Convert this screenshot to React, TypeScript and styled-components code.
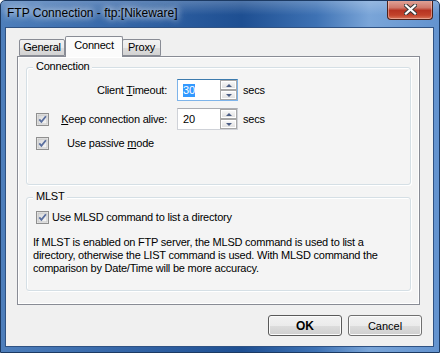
import React, { FC } from "react";
import styled, { createGlobalStyle } from "styled-components";

const GlobalStyle = createGlobalStyle`
  html, body {
    margin: 0;
    padding: 0;
    background: #ffffff;
  }
  body {
    font-family: "Liberation Sans", Arial, sans-serif;
    font-size: 11px;
    letter-spacing: -0.22px;
    color: #000000;
  }
  * {
    box-sizing: border-box;
  }
`;

const Window = styled.div`
  width: 440px;
  height: 353px;
  border: 1px solid #1c3a63;
  border-radius: 5px 5px 0 0;
  background: linear-gradient(180deg, rgba(255, 255, 255, 0.22) 0px, rgba(255, 255, 255, 0) 14px),
    linear-gradient(90deg, #4d7ebb 0%, #3768a9 25%, #1e4f92 55%, #3e72b4 72%, #7aa5d8 84%, #6393cf 100%);
  padding: 0 5px 5px 4px;
  display: flex;
  flex-direction: column;
  overflow: hidden;
`;

const TitleBar = styled.div`
  height: 26px;
  display: flex;
  align-items: flex-start;
  justify-content: space-between;
`;

const TitleText = styled.div`
  margin: 4px 0 0 2px;
  font-family: "Liberation Sans", Arial, sans-serif;
  font-size: 12px;
  letter-spacing: 0;
  line-height: 16px;
  color: #000000;
  text-shadow: 0 0 6px #ffffff, 0 0 10px rgba(255, 255, 255, 0.8);
`;

const CloseButton = styled.div`
  width: 46px;
  height: 20px;
  margin: -1px 1px 0 0;
  border: 1px solid #4d2119;
  border-top: none;
  border-radius: 0 0 4px 4px;
  background: linear-gradient(180deg, #e2a79c 0%, #d0796b 40%, #b73422 55%, #c2432b 80%, #d9765a 100%);
  box-shadow: inset 0 0 0 1px rgba(255, 220, 210, 0.45);
  display: flex;
  align-items: center;
  justify-content: center;
`;

const Client = styled.div`
  flex: 1;
  border: 1px solid #2f5283;
  background: #f0f0f0;
  padding: 8px 11px 10px 11px;
  display: flex;
  flex-direction: column;
`;

const TabStrip = styled.div`
  height: 20px;
  padding-left: 2px;
  display: flex;
  align-items: flex-end;
  position: relative;
  z-index: 1;
`;

const Tab = styled.div<{ $active?: boolean; $width: number }>`
  width: ${(p) => p.$width}px;
  height: ${(p) => (p.$active ? 21 : 17)}px;
  margin-bottom: ${(p) => (p.$active ? -1 : 0)}px;
  margin-left: ${(p) => (p.$active ? 0 : -1)}px;
  border: 1px solid #898c95;
  border-bottom: ${(p) => (p.$active ? "none" : "1px solid #898c95")};
  border-radius: 2px 2px 0 0;
  background: ${(p) =>
    p.$active
      ? "#fbfbfb"
      : "linear-gradient(180deg, #f2f2f2 0%, #ebebeb 50%, #dddddd 51%, #d3d3d3 100%)"};
  display: flex;
  align-items: center;
  justify-content: center;
  padding-bottom: ${(p) => (p.$active ? 3 : 0)}px;
  line-height: 13px;
  &:first-child {
    margin-left: 0;
  }
`;

const Panel = styled.div`
  width: 403px;
  height: 249px;
  border: 1px solid #898c95;
  background: #f4f4f4;
  box-shadow: inset 0 0 0 1px #ffffff;
  padding: 10px 8px 0 8px;
  display: flex;
  flex-direction: column;
  gap: 12px;
`;

const Group = styled.div<{ $height: number }>`
  position: relative;
  height: ${(p) => p.$height}px;
  border: 1px solid #d5dfe5;
  border-radius: 3px;
  box-shadow: inset 1px 1px 0 #ffffff, 1px 1px 0 #ffffff;
`;

const Legend = styled.span`
  position: absolute;
  top: -8px;
  left: 6px;
  padding: 0 3px;
  background: #f4f4f4;
  line-height: 13px;
`;

const ConnectionBody = styled.div`
  padding: 11px 0 0 9px;
  display: flex;
  flex-direction: column;
  gap: 7px;
`;

const Row = styled.div<{ $height: number }>`
  height: ${(p) => p.$height}px;
  display: flex;
  align-items: center;
  line-height: 13px;
`;

const LabelCell = styled.div`
  width: 132px;
  display: flex;
  align-items: center;
  justify-content: flex-end;
  padding-right: 1px;
  & > svg {
    margin-right: auto;
  }
`;

const Spinner = styled.div<{ $focused?: boolean }>`
  width: 61px;
  height: 22px;
  margin-left: 9px;
  display: flex;
  background: #ffffff;
  border: 1px solid ${(p) => (p.$focused ? "#7eb4ea" : "#cfd2d8")};
  border-top-color: ${(p) => (p.$focused ? "#3d7bad" : "#abadb3")};
`;

const SpinValue = styled.div`
  flex: 1;
  padding-left: 5px;
  display: flex;
  align-items: center;
`;

const Selected = styled.span`
  background: #3399ff;
  color: #ffffff;
  line-height: 13px;
`;

const SpinButtons = styled.div`
  width: 17px;
  display: flex;
  flex-direction: column;
`;

const SpinButton = styled.div`
  flex: 1;
  border: 1px solid #a7a7a7;
  background: linear-gradient(180deg, #fafafa 0%, #ececec 50%, #dedede 100%);
  box-shadow: inset 0 0 0 1px #ffffff;
  display: flex;
  align-items: center;
  justify-content: center;
`;

const Arrow = styled.span<{ $up?: boolean }>`
  width: 0;
  height: 0;
  border-left: 3px solid transparent;
  border-right: 3px solid transparent;
  ${(p) => (p.$up ? "border-bottom: 3px solid #4b5d84;" : "border-top: 3px solid #4b5d84;")}
`;

const Unit = styled.span`
  margin-left: 5px;
`;

const CheckText = styled.span<{ $gap: number }>`
  margin-left: ${(p) => p.$gap}px;
`;

const MlstBody = styled.div`
  padding: 13px 0 0 6px;
`;

const MlstCheck = styled.div`
  height: 13px;
  padding-left: 3px;
  display: flex;
  align-items: center;
  line-height: 13px;
`;

const Note = styled.p`
  margin: 12px 0 0 0;
  line-height: 13px;
`;

const ButtonRow = styled.div`
  margin-top: 10px;
  height: 21px;
  display: flex;
  justify-content: flex-end;
  gap: 6px;
`;

const DialogButton = styled.button<{ $default?: boolean }>`
  width: 74px;
  height: 21px;
  padding: 0;
  border: 1px solid ${(p) => (p.$default ? "#5a5a5a" : "#707070")};
  border-radius: 3px;
  background: linear-gradient(180deg, #f2f2f2 0%, #ebebeb 50%, #dddddd 51%, #cfcfcf 100%);
  box-shadow: inset 0 0 0 1px #fbfbfb;
  font-family: "Liberation Sans", Arial, sans-serif;
  font-size: ${(p) => (p.$default ? 12 : 11)}px;
  font-weight: ${(p) => (p.$default ? "bold" : "normal")};
  letter-spacing: 0;
  color: #000000;
`;

const CheckBox: FC = () => (
  <svg width="13" height="13" viewBox="0 0 13 13">
    <defs>
      <linearGradient id="cbfill" x1="0" y1="0" x2="1" y2="1">
        <stop offset="0" stopColor="#d6d6d6" />
        <stop offset="1" stopColor="#f8f8f8" />
      </linearGradient>
    </defs>
    <rect x="0.5" y="0.5" width="12" height="12" fill="#f4f4f4" stroke="#8f8f8f" />
    <rect x="2" y="2" width="9" height="9" fill="url(#cbfill)" stroke="#c4c4c4" strokeWidth="1" />
    <path d="M3.3 6.4 L5.4 8.9 L9.9 3.2" fill="none" stroke="#5a6f9f" strokeWidth="1.8" />
  </svg>
);

const CloseGlyph: FC = () => (
  <svg width="13" height="11" viewBox="0 0 13 11">
    <path d="M2 1.5 L11 9.5 M11 1.5 L2 9.5" stroke="#3a3a3a" strokeWidth="4.2" strokeLinecap="square" />
    <path d="M2 1.5 L11 9.5 M11 1.5 L2 9.5" stroke="#ffffff" strokeWidth="2.2" strokeLinecap="square" />
  </svg>
);

const SpinControl: FC<{ value: string; focused?: boolean }> = ({ value, focused }) => (
  <Spinner $focused={focused}>
    <SpinValue>{focused ? <Selected>{value}</Selected> : value}</SpinValue>
    <SpinButtons>
      <SpinButton>
        <Arrow $up />
      </SpinButton>
      <SpinButton>
        <Arrow />
      </SpinButton>
    </SpinButtons>
  </Spinner>
);

const App: FC = () => {
  return (
    <>
      <GlobalStyle />
      <Window>
        <TitleBar>
          <TitleText>FTP Connection - ftp:[Nikeware]</TitleText>
          <CloseButton>
            <CloseGlyph />
          </CloseButton>
        </TitleBar>
        <Client>
          <TabStrip>
            <Tab $width={46}>General</Tab>
            <Tab $width={58} $active>
              Connect
            </Tab>
            <Tab $width={39}>Proxy</Tab>
          </TabStrip>
          <Panel>
            <Group $height={118}>
              <Legend>Connection</Legend>
              <ConnectionBody>
                <Row $height={22}>
                  <LabelCell>
                    <span>
                      Client <u>T</u>imeout:
                    </span>
                  </LabelCell>
                  <SpinControl value="30" focused />
                  <Unit>secs</Unit>
                </Row>
                <Row $height={22}>
                  <LabelCell>
                    <CheckBox />
                    <span>
                      <u>K</u>eep connection alive:
                    </span>
                  </LabelCell>
                  <SpinControl value="20" />
                  <Unit>secs</Unit>
                </Row>
                <Row $height={13}>
                  <CheckBox />
                  <CheckText $gap={18}>
                    Use passive <u>m</u>ode
                  </CheckText>
                </Row>
              </ConnectionBody>
            </Group>
            <Group $height={94}>
              <Legend>MLST</Legend>
              <MlstBody>
                <MlstCheck>
                  <CheckBox />
                  <CheckText $gap={3}>Use MLSD command to list a directory</CheckText>
                </MlstCheck>
                <Note>
                  If MLST is enabled on FTP server, the MLSD command is used to list a
                  <br />
                  directory, otherwise the LIST command is used. With MLSD command the
                  <br />
                  comparison by Date/Time will be more accuracy.
                </Note>
              </MlstBody>
            </Group>
          </Panel>
          <ButtonRow>
            <DialogButton $default>OK</DialogButton>
            <DialogButton>Cancel</DialogButton>
          </ButtonRow>
        </Client>
      </Window>
    </>
  );
};

export default App;
